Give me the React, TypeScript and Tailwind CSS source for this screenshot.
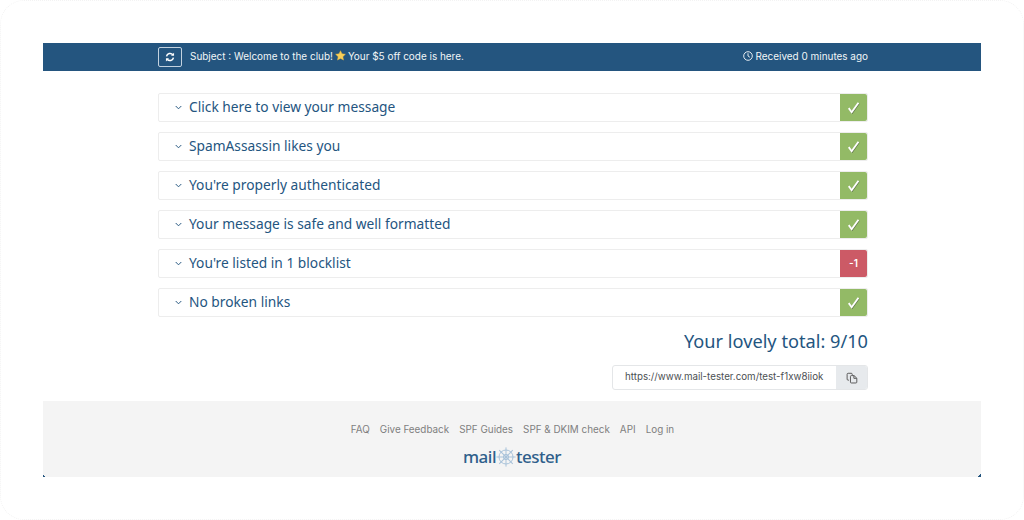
import React from "react";

const rows: { label: string; bad?: boolean }[] = [
  { label: "Click here to view your message" },
  { label: "SpamAssassin likes you" },
  { label: "You're properly authenticated" },
  { label: "Your message is safe and well formatted" },
  { label: "You're listed in 1 blocklist", bad: true },
  { label: "No broken links" },
];

const links = ["FAQ", "Give Feedback", "SPF Guides", "SPF & DKIM check", "API", "Log in"];

function Refresh() {
  return (
    <svg width="10" height="10" viewBox="0 0 16 16" fill="none" stroke="#fff" strokeWidth="2.4">
      <path d="M2.5 7a5.6 5.6 0 0 1 10-2.5" />
      <path d="M13.5 9a5.6 5.6 0 0 1-10 2.5" />
      <path d="M14.5 1v5h-5z" fill="#fff" stroke="none" />
      <path d="M1.5 15v-5h5z" fill="#fff" stroke="none" />
    </svg>
  );
}

function Clock() {
  return (
    <svg width="10" height="10" viewBox="0 0 16 16" fill="none" stroke="#fff" strokeWidth="1.4">
      <circle cx="8" cy="8" r="6.9" />
      <path d="M8 3.6V8l3 2" />
    </svg>
  );
}

function Star() {
  return (
    <svg width="11" height="11" viewBox="0 0 24 24" className="mx-[2px] inline-block align-[-1.5px]">
      <path
        d="M12 1.5l3.2 6.9 7.5.9-5.5 5.2 1.4 7.5L12 18.3l-6.6 3.7 1.4-7.5L1.3 9.3l7.5-.9z"
        fill="#f8cf5a"
        stroke="#eeb63a"
        strokeWidth="1"
      />
    </svg>
  );
}

function Chevron() {
  return (
    <svg width="7" height="5" viewBox="0 0 8 5" fill="none" stroke="#24557f" strokeWidth="1.1">
      <path d="M.8.8 4 4l3.2-3.2" />
    </svg>
  );
}

function Check() {
  return (
    <svg width="13" height="13" viewBox="0 0 12 12" fill="none">
      <path d="M1.6 6.6 4.3 10.4 10.6 1.6" stroke="#3f4a38" strokeWidth="1.5" transform="translate(.5 .6)" opacity=".6" />
      <path d="M1.6 6.6 4.3 10.4 10.6 1.6" stroke="#fff" strokeWidth="1.7" />
    </svg>
  );
}

function Copy() {
  return (
    <svg width="12" height="12" viewBox="0 0 14 14" fill="none" stroke="#555" strokeWidth="1.1">
      <path d="M3.5 9.5h-1a1.2 1.2 0 0 1-1.2-1.2V2.7a1.2 1.2 0 0 1 1.2-1.2h3.6a1.2 1.2 0 0 1 1.2 1.2v.8" />
      <path d="M6.2 4.2h3.2l3.2 3v4.6a1 1 0 0 1-1 1H6.2a1 1 0 0 1-1-1V5.2a1 1 0 0 1 1-1z" />
      <path d="M9.2 4.4v3h3.2" />
    </svg>
  );
}

function Wheel() {
  const spokes = [0, 45, 90, 135];
  return (
    <svg width="20" height="20" viewBox="0 0 20 20" fill="none" stroke="#a9c3da" strokeWidth="1">
      <circle cx="10" cy="10" r="7" />
      <circle cx="10" cy="10" r="2.6" />
      {spokes.map((a) => (
        <line key={a} x1="10" y1="0.4" x2="10" y2="19.6" transform={`rotate(${a} 10 10)`} />
      ))}
    </svg>
  );
}

export default function App() {
  return (
    <div className="relative h-[520px] w-[1024px] overflow-hidden bg-white px-[43px] pt-[43px] font-['Inter',sans-serif]">
      <div className="pointer-events-none absolute inset-0 rounded-[24px] border border-dotted border-[#f3f3f3]" />

      <header className="flex h-[28px] items-center justify-between bg-[#24557f] pl-[115px] pr-[113px] text-[9.95px] text-[#f2f5f8]">
        <div className="flex items-center">
          <span className="mr-[8px] flex h-[20px] w-[24px] items-center justify-center rounded-[2px] border border-[#c3d2df]">
            <Refresh />
          </span>
          <span className="whitespace-nowrap pb-[2px]">
            Subject : Welcome to the club!
            <Star />
            Your $5 off code is here.
          </span>
        </div>
        <div className="flex items-center gap-[2px] pb-[2px]">
          <Clock />
          <span>Received 0 minutes ago</span>
        </div>
      </header>

      <main className="flex flex-col px-[115px] pt-[22px] pr-[113px]">
        <div className="flex flex-col gap-[10px]">
          {rows.map((r) => (
            <div
              key={r.label}
              className="flex h-[29px] items-stretch rounded-[2px] border border-[#ededed] bg-white"
            >
              <div className="flex flex-1 items-center pl-[16px] font-['Noto_Sans',sans-serif] text-[13.75px] text-[#24557f]">
                <Chevron />
                <span className="ml-[7px] pb-[1px]">{r.label}</span>
              </div>
              <div
                className={`flex w-[27px] items-center justify-center rounded-r-[2px] text-[10px] font-semibold text-white ${
                  r.bad ? "bg-[#cc5a66]" : "bg-[#93ba66]"
                }`}
              >
                {r.bad ? "-1" : <Check />}
              </div>
            </div>
          ))}
        </div>

        <div className="mt-[11px] text-right font-['Noto_Sans',sans-serif] text-[18.2px] leading-[26px] text-[#24557f]">
          Your lovely total: 9/10
        </div>

        <div className="mt-[11px] flex justify-end">
          <div className="flex h-[25px] w-[256px] overflow-hidden rounded-[3px] border border-[#e4e6e8] text-[9.75px] text-[#4b4f53]">
            <div className="flex flex-1 items-center whitespace-nowrap pl-[12px]">https://www.mail-tester.com/test-f1xw8iiok</div>
            <div className="flex w-[31px] items-center justify-center bg-[#e7eaed]">
              <Copy />
            </div>
          </div>
        </div>
      </main>

      <footer className="relative mt-[11px] flex h-[76px] flex-col items-center bg-[#f4f4f4]">
        <nav className="ml-[1px] mt-[21px] flex gap-[10px] text-[9.9px] leading-[14px] text-[#7f7f7f]">
          {links.map((l) => (
            <span key={l}>{l}</span>
          ))}
        </nav>
        <div className="mt-[10px] flex items-center font-['Noto_Sans',sans-serif] text-[17px] font-medium leading-[22px] tracking-[-0.5px] text-[#2f5f8b]">
          <span>mail</span>
          <Wheel />
          <span>tester</span>
        </div>
        <span className="absolute bottom-0 left-0 h-[3px] w-[3px] bg-[linear-gradient(45deg,#24557f_50%,transparent_50%)]" />
        <span className="absolute bottom-0 right-0 h-[3px] w-[3px] bg-[linear-gradient(-45deg,#24557f_50%,transparent_50%)]" />
      </footer>
    </div>
  );
}
